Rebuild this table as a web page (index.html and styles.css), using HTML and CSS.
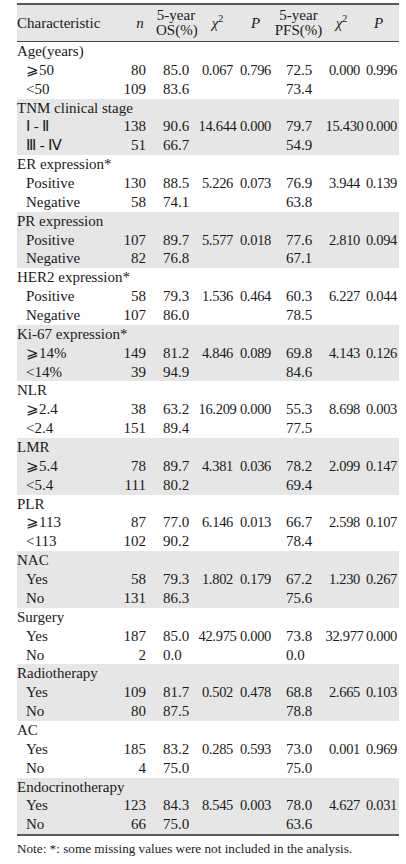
FILE: index.html
```html
<!DOCTYPE html>
<html>
<head>
<meta charset="utf-8">
<link rel="stylesheet" href="styles.css">
</head>
<body>
<div class="wrap">
<table class="tbl">
<colgroup>
<col class="c-char"><col class="c-n"><col class="c-os"><col class="c-x1"><col class="c-p1"><col class="c-pfs"><col class="c-x2"><col class="c-p2">
</colgroup>
<thead>
<tr>
<th class="h-char">Characteristic</th>
<th class="h-n"><i>n</i></th>
<th class="h-os">5-year<br>OS(%)</th>
<th class="h-x1"><i>χ</i><sup>2</sup></th>
<th class="h-p1"><i>P</i></th>
<th class="h-pfs">5-year<br>PFS(%)</th>
<th class="h-x2"><i>χ</i><sup>2</sup></th>
<th class="h-p2"><i>P</i></th>
</tr>
</thead>
<tbody class="grp">
<tr><td class="lab" colspan="8">Age(years)</td></tr>
<tr><td class="sub">⩾50</td><td class="n">80</td><td class="os">85.0</td><td class="x1">0.067</td><td class="p1">0.796</td><td class="pfs">72.5</td><td class="x2">0.000</td><td class="p2">0.996</td></tr>
<tr><td class="sub">&lt;50</td><td class="n">109</td><td class="os">83.6</td><td></td><td></td><td class="pfs">73.4</td><td></td><td></td></tr>
</tbody>
<tbody class="grp shade">
<tr><td class="lab" colspan="8">TNM clinical stage</td></tr>
<tr><td class="sub">Ⅰ - Ⅱ</td><td class="n">138</td><td class="os">90.6</td><td class="x1">14.644</td><td class="p1">0.000</td><td class="pfs">79.7</td><td class="x2">15.430</td><td class="p2">0.000</td></tr>
<tr><td class="sub">Ⅲ - Ⅳ</td><td class="n">51</td><td class="os">66.7</td><td></td><td></td><td class="pfs">54.9</td><td></td><td></td></tr>
</tbody>
<tbody class="grp">
<tr><td class="lab" colspan="8">ER expression*</td></tr>
<tr><td class="sub">Positive</td><td class="n">130</td><td class="os">88.5</td><td class="x1">5.226</td><td class="p1">0.073</td><td class="pfs">76.9</td><td class="x2">3.944</td><td class="p2">0.139</td></tr>
<tr><td class="sub">Negative</td><td class="n">58</td><td class="os">74.1</td><td></td><td></td><td class="pfs">63.8</td><td></td><td></td></tr>
</tbody>
<tbody class="grp shade">
<tr><td class="lab" colspan="8">PR expression</td></tr>
<tr><td class="sub">Positive</td><td class="n">107</td><td class="os">89.7</td><td class="x1">5.577</td><td class="p1">0.018</td><td class="pfs">77.6</td><td class="x2">2.810</td><td class="p2">0.094</td></tr>
<tr><td class="sub">Negative</td><td class="n">82</td><td class="os">76.8</td><td></td><td></td><td class="pfs">67.1</td><td></td><td></td></tr>
</tbody>
<tbody class="grp">
<tr><td class="lab" colspan="8">HER2 expression*</td></tr>
<tr><td class="sub">Positive</td><td class="n">58</td><td class="os">79.3</td><td class="x1">1.536</td><td class="p1">0.464</td><td class="pfs">60.3</td><td class="x2">6.227</td><td class="p2">0.044</td></tr>
<tr><td class="sub">Negative</td><td class="n">107</td><td class="os">86.0</td><td></td><td></td><td class="pfs">78.5</td><td></td><td></td></tr>
</tbody>
<tbody class="grp shade">
<tr><td class="lab" colspan="8">Ki-67 expression*</td></tr>
<tr><td class="sub">⩾14%</td><td class="n">149</td><td class="os">81.2</td><td class="x1">4.846</td><td class="p1">0.089</td><td class="pfs">69.8</td><td class="x2">4.143</td><td class="p2">0.126</td></tr>
<tr><td class="sub">&lt;14%</td><td class="n">39</td><td class="os">94.9</td><td></td><td></td><td class="pfs">84.6</td><td></td><td></td></tr>
</tbody>
<tbody class="grp">
<tr><td class="lab" colspan="8">NLR</td></tr>
<tr><td class="sub">⩾2.4</td><td class="n">38</td><td class="os">63.2</td><td class="x1">16.209</td><td class="p1">0.000</td><td class="pfs">55.3</td><td class="x2">8.698</td><td class="p2">0.003</td></tr>
<tr><td class="sub">&lt;2.4</td><td class="n">151</td><td class="os">89.4</td><td></td><td></td><td class="pfs">77.5</td><td></td><td></td></tr>
</tbody>
<tbody class="grp shade">
<tr><td class="lab" colspan="8">LMR</td></tr>
<tr><td class="sub">⩾5.4</td><td class="n">78</td><td class="os">89.7</td><td class="x1">4.381</td><td class="p1">0.036</td><td class="pfs">78.2</td><td class="x2">2.099</td><td class="p2">0.147</td></tr>
<tr><td class="sub">&lt;5.4</td><td class="n">111</td><td class="os">80.2</td><td></td><td></td><td class="pfs">69.4</td><td></td><td></td></tr>
</tbody>
<tbody class="grp">
<tr><td class="lab" colspan="8">PLR</td></tr>
<tr><td class="sub">⩾113</td><td class="n">87</td><td class="os">77.0</td><td class="x1">6.146</td><td class="p1">0.013</td><td class="pfs">66.7</td><td class="x2">2.598</td><td class="p2">0.107</td></tr>
<tr><td class="sub">&lt;113</td><td class="n">102</td><td class="os">90.2</td><td></td><td></td><td class="pfs">78.4</td><td></td><td></td></tr>
</tbody>
<tbody class="grp shade">
<tr><td class="lab" colspan="8">NAC</td></tr>
<tr><td class="sub">Yes</td><td class="n">58</td><td class="os">79.3</td><td class="x1">1.802</td><td class="p1">0.179</td><td class="pfs">67.2</td><td class="x2">1.230</td><td class="p2">0.267</td></tr>
<tr><td class="sub">No</td><td class="n">131</td><td class="os">86.3</td><td></td><td></td><td class="pfs">75.6</td><td></td><td></td></tr>
</tbody>
<tbody class="grp">
<tr><td class="lab" colspan="8">Surgery</td></tr>
<tr><td class="sub">Yes</td><td class="n">187</td><td class="os">85.0</td><td class="x1">42.975</td><td class="p1">0.000</td><td class="pfs">73.8</td><td class="x2">32.977</td><td class="p2">0.000</td></tr>
<tr><td class="sub">No</td><td class="n">2</td><td class="os">0.0</td><td></td><td></td><td class="pfs">0.0</td><td></td><td></td></tr>
</tbody>
<tbody class="grp shade">
<tr><td class="lab" colspan="8">Radiotherapy</td></tr>
<tr><td class="sub">Yes</td><td class="n">109</td><td class="os">81.7</td><td class="x1">0.502</td><td class="p1">0.478</td><td class="pfs">68.8</td><td class="x2">2.665</td><td class="p2">0.103</td></tr>
<tr><td class="sub">No</td><td class="n">80</td><td class="os">87.5</td><td></td><td></td><td class="pfs">78.8</td><td></td><td></td></tr>
</tbody>
<tbody class="grp">
<tr><td class="lab" colspan="8">AC</td></tr>
<tr><td class="sub">Yes</td><td class="n">185</td><td class="os">83.2</td><td class="x1">0.285</td><td class="p1">0.593</td><td class="pfs">73.0</td><td class="x2">0.001</td><td class="p2">0.969</td></tr>
<tr><td class="sub">No</td><td class="n">4</td><td class="os">75.0</td><td></td><td></td><td class="pfs">75.0</td><td></td><td></td></tr>
</tbody>
<tbody class="grp shade last">
<tr><td class="lab" colspan="8">Endocrinotherapy</td></tr>
<tr><td class="sub">Yes</td><td class="n">123</td><td class="os">84.3</td><td class="x1">8.545</td><td class="p1">0.003</td><td class="pfs">78.0</td><td class="x2">4.627</td><td class="p2">0.031</td></tr>
<tr><td class="sub">No</td><td class="n">66</td><td class="os">75.0</td><td></td><td></td><td class="pfs">63.6</td><td></td><td></td></tr>
</tbody>
</table>
<p class="note">Note: *: some missing values were not included in the analysis.</p>
</div>
</body>
</html>
```

FILE: styles.css
```css
html, body {
  margin: 0;
  padding: 0;
  background: #ffffff;
}

.wrap {
  padding: 3px 7px 0 17px;
  font-family: "Liberation Serif", "Times New Roman", serif;
  color: #1a1a1a;
}

.tbl {
  width: 382px;
  table-layout: fixed;
  border-collapse: separate;
  border-spacing: 0;
  font-family: "Liberation Serif", "Times New Roman", serif;
  font-size: 15px;
}

.tbl th,
.tbl td {
  font-family: "Liberation Serif", "Times New Roman", serif;
}

.c-char { width: 103px; }
.c-n { width: 30px; }
.c-os { width: 46px; }
.c-x1 { width: 43px; }
.c-p1 { width: 33px; }
.c-pfs { width: 53px; }
.c-x2 { width: 39px; }
.c-p2 { width: 35px; }

.tbl th {
  background: #e6e6e6;
  font-weight: normal;
  line-height: 15px;
  padding: 3px 0;
  height: 30px;
  border-top: 2px solid #595959;
  border-bottom: 1px solid #4a4a4a;
  text-align: center;
  white-space: nowrap;
}

.tbl th sup {
  font-size: 10px;
  vertical-align: 6px;
  line-height: 0;
}

.h-char { text-align: left !important; }
.h-n { padding-left: 10px !important; }
.h-os { padding-left: 6px !important; }
.h-x2 { padding-right: 6px !important; }
.h-p2 { padding-right: 6px !important; }

.tbl td {
  padding: 0;
  line-height: 18.857px;
  height: 18.857px;
  white-space: nowrap;
  text-align: center;
}

.shade td {
  background: #e6e6e6;
}

.lab { text-align: left !important; }
.sub { text-align: left !important; padding-left: 9px !important; }
.n { text-align: right !important; padding-right: 4px !important; }
.os { text-align: left !important; padding-left: 13px !important; }
.pfs { text-align: left !important; padding-left: 14px !important; }

.tbl td.x1, .tbl td.p1, .tbl td.x2, .tbl td.p2 {
  font-size: 14.5px;
  letter-spacing: -0.3px;
}

.last tr:last-child td {
  border-bottom: 2px solid #595959;
}

.note {
  margin: 5px 0 0 0;
  font-size: 13.2px;
  line-height: 16px;
}
```
